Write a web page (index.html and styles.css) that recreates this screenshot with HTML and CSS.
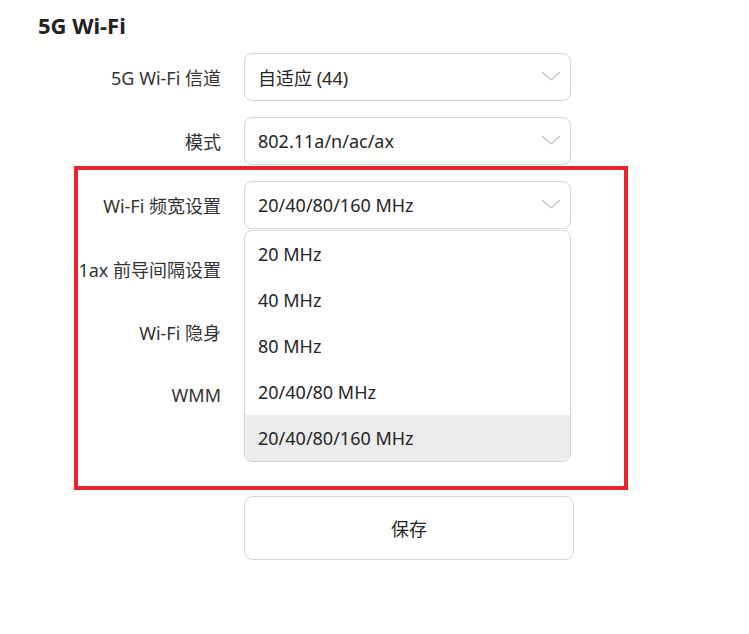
FILE: index.html
```html
<!DOCTYPE html>
<html lang="zh-CN">
<head>
<meta charset="utf-8">
<title>5G Wi-Fi</title>
<link rel="stylesheet" href="styles.css">
</head>
<body>
<div class="page">
  <h2 class="title">5G Wi-Fi</h2>
  <div class="form">
    <div class="row">
      <div class="label"><span>5G Wi-Fi 信道</span></div>
      <div class="select"><span class="value">自适应 (44)</span><svg class="chev" viewBox="0 0 20 10" width="20" height="10"><path d="M1 1 L10 9 L19 1" fill="none" stroke="#c2c2c2" stroke-width="1.3"/></svg></div>
    </div>
    <div class="row">
      <div class="label"><span>模式</span></div>
      <div class="select"><span class="value">802.11a/n/ac/ax</span><svg class="chev" viewBox="0 0 20 10" width="20" height="10"><path d="M1 1 L10 9 L19 1" fill="none" stroke="#c2c2c2" stroke-width="1.3"/></svg></div>
    </div>
    <div class="row">
      <div class="label"><span>Wi-Fi 频宽设置</span></div>
      <div class="select open"><span class="value">20/40/80/160 MHz</span><svg class="chev" viewBox="0 0 20 10" width="20" height="10"><path d="M1 1 L10 9 L19 1" fill="none" stroke="#c2c2c2" stroke-width="1.3"/></svg>
        <ul class="menu">
          <li>20 MHz</li>
          <li>40 MHz</li>
          <li>80 MHz</li>
          <li>20/40/80 MHz</li>
          <li class="active">20/40/80/160 MHz</li>
        </ul>
      </div>
    </div>
    <div class="row short">
      <div class="label"><span>802.11ax 前导间隔设置</span></div>
      <div class="field"></div>
    </div>
    <div class="row short">
      <div class="label"><span>Wi-Fi 隐身</span></div>
      <div class="field"></div>
    </div>
    <div class="row">
      <div class="label"><span>WMM</span></div>
      <div class="field"></div>
    </div>
    <div class="row actions">
      <div class="label"></div>
      <button class="save">保存</button>
    </div>
  </div>
  <div class="highlight"></div>
</div>
</body>
</html>
```

FILE: styles.css
```css
html, body {
  margin: 0;
  padding: 0;
  background: #ffffff;
}
body {
  font-family: "Noto Sans", "Noto Sans CJK SC", sans-serif;
  color: #262626;
}
.page {
  position: relative;
  width: 749px;
  height: 634px;
  padding: 10px 0 0 38px;
  box-sizing: border-box;
}
.title {
  margin: 0;
  font-size: 22px;
  font-weight: 700;
  line-height: 30px;
  color: #222;
}
.form {
  margin: 13px 0 0 38px;
  display: flex;
  flex-direction: column;
  gap: 16px;
}
.row {
  display: grid;
  grid-template-columns: 145px 327px;
  column-gap: 23px;
  align-items: center;
  height: 48px;
}
.row.short {
  height: 47px;
}
.label {
  display: flex;
  justify-content: flex-end;
  overflow: hidden;
  white-space: nowrap;
  font-size: 18px;
  color: #333;
}
.select {
  position: relative;
  height: 48px;
  box-sizing: border-box;
  border: 1px solid #d4d4d4;
  border-radius: 8px;
  display: flex;
  align-items: center;
  padding: 0 9px 0 13px;
  font-size: 18px;
  color: #262626;
}
.value {
  flex: 1;
}
.chev {
  display: block;
  margin-top: -3px;
}
.menu {
  position: absolute;
  left: -1px;
  right: -1px;
  top: 48px;
  margin: 0;
  padding: 0;
  list-style: none;
  background: #fff;
  border: 1px solid #d4d4d4;
  border-radius: 8px;
  overflow: hidden;
  z-index: 2;
}
.menu li {
  height: 46px;
  line-height: 46px;
  padding-left: 13px;
}
.menu li.active {
  background: #ececec;
}
.actions {
  margin-top: 61px;
  height: 64px;
  grid-template-columns: 145px 330px;
  column-gap: 23px;
}
.save {
  height: 64px;
  background: #fff;
  border: 1px solid #d4d4d4;
  border-radius: 9px;
  font-family: "Noto Sans CJK SC", sans-serif;
  font-size: 18px;
  color: #262626;
}
.highlight {
  position: absolute;
  left: 74px;
  top: 166px;
  width: 554px;
  height: 324px;
  box-sizing: border-box;
  border: 4px solid #e8232b;
  z-index: 3;
  pointer-events: none;
}
```
